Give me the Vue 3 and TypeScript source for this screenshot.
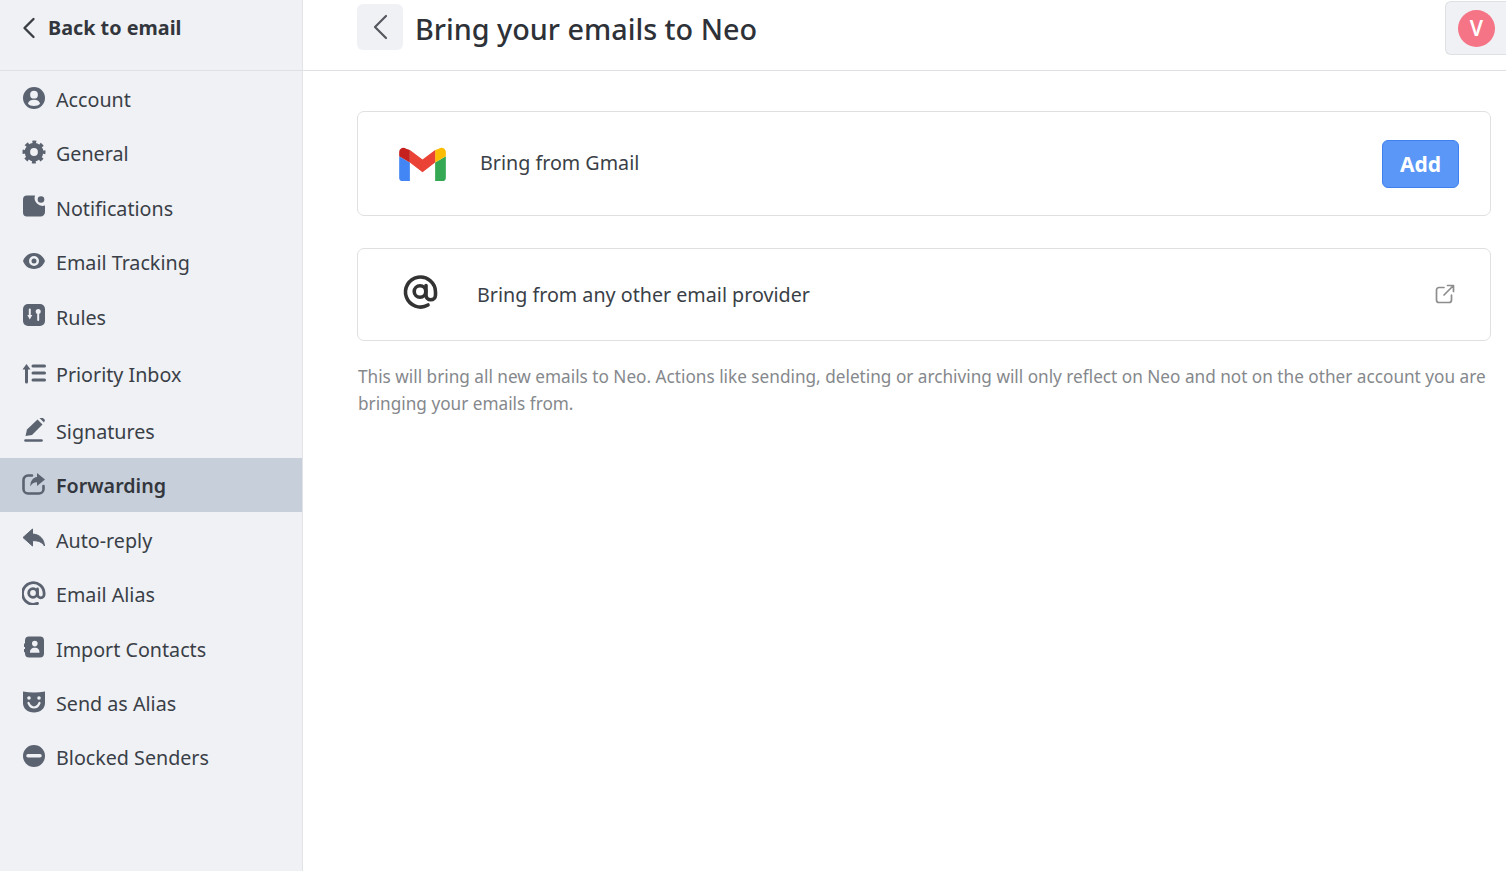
<script setup lang="ts">
interface Item { label: string; icon: string; gap?: boolean; gapSmall?: boolean; active?: boolean }
const items: Item[] = [
  { label: 'Account', icon: 'account' },
  { label: 'General', icon: 'general' },
  { label: 'Notifications', icon: 'notifications' },
  { label: 'Email Tracking', icon: 'tracking' },
  { label: 'Rules', icon: 'rules' },
  { label: 'Priority Inbox', icon: 'priority', gap: true },
  { label: 'Signatures', icon: 'signatures', gapSmall: true },
  { label: 'Forwarding', icon: 'forwarding', active: true },
  { label: 'Auto-reply', icon: 'reply' },
  { label: 'Email Alias', icon: 'alias' },
  { label: 'Import Contacts', icon: 'contacts' },
  { label: 'Send as Alias', icon: 'mask' },
  { label: 'Blocked Senders', icon: 'blocked' },
]
</script>

<template>
  <div class="page">
    <aside class="side">
      <div class="back">
        <svg class="back-ico" width="14" height="22" viewBox="0 0 14 22"><path d="M11.5 2 L2.500 11 L11.500 20" fill="none" stroke="#3b3f45" stroke-width="2.400" stroke-linecap="round" stroke-linejoin="round"/></svg>
        <span>Back to email</span>
      </div>
      <nav class="nav">
        <a v-for="it in items" :key="it.label" class="row" :class="{ active: it.active, gap: it.gap, 'gap-s': it.gapSmall }">
          <svg class="ico" width="24" height="24" viewBox="0 0 24 24" fill="#5b6270">
            <template v-if="it.icon === 'account'">
              <path fill-rule="evenodd" d="M12 1a11 11 0 1 0 0 22a11 11 0 0 0 0-22Zm0 3.800a3.900 3.900 0 1 1 0 7.800a3.900 3.900 0 0 1 0-7.800Zm-6 13c.4-2.800 2.600-4 6-4s5.600 1.200 6 4c-1.300 1.400-3.400 2.200-6 2.200s-4.700-.8-6-2.200Z"/>
            </template>
            <template v-else-if="it.icon === 'general'">
              <circle cx="12" cy="12" r="6.600" fill="none" stroke="#5b6270" stroke-width="5.400"/>
              <circle cx="12" cy="12" r="10" fill="none" stroke="#5b6270" stroke-width="3" stroke-dasharray="3.850 4" stroke-dashoffset="1.900"/>
            </template>
            <template v-else-if="it.icon === 'notifications'">
              <path d="M5 1.500h8a8 8 0 0 0 10 10V18a4.500 4.500 0 0 1-4.500 4.500H5A4 4 0 0 1 1 18.500V5.500a4 4 0 0 1 4-4Z"/>
              <circle cx="19" cy="5.500" r="3.300"/>
            </template>
            <template v-else-if="it.icon === 'tracking'">
              <path fill-rule="evenodd" d="M12 4C6.500 4 2.500 7.600 1 12c1.500 4.400 5.500 8 11 8s9.500-3.600 11-8c-1.500-4.400-5.500-8-11-8Zm0 3a5 5 0 1 1 0 10a5 5 0 0 1 0-10Zm0 2.500a2.500 2.500 0 1 0 0 5a2.500 2.500 0 0 0 0-5Z"/>
            </template>
            <template v-else-if="it.icon === 'rules'">
              <rect x="1" y="1" width="22" height="22" rx="5"/>
              <path d="M7.800 6.500v5" stroke="#eff1f5" stroke-width="2" stroke-linecap="round"/>
              <path d="M5.300 12h5l-2.500 4.500Z" fill="#eff1f5"/>
              <path d="M16.200 11v6" stroke="#eff1f5" stroke-width="2" stroke-linecap="round"/>
              <circle cx="16.200" cy="8.500" r="2.500" fill="#eff1f5"/>
            </template>
            <template v-else-if="it.icon === 'priority'">
              <path d="M4.500 21V7" stroke="#5b6270" stroke-width="3" stroke-linecap="round"/>
              <path d="M.5 8.500L4.500 3l4 5.500Z"/>
              <path d="M11 5h11.500M11 12h11.500M11 19h11.500" stroke="#5b6270" stroke-width="3" stroke-linecap="round"/>
            </template>
            <template v-else-if="it.icon === 'signatures'">
              <path d="M3.500 18l1.500-6.500L15.500 1.500l5 5L10 17Z"/>
              <path d="M17.500 0l2-1.500 3.500 3.500-1 2.500Z"/>
              <path d="M3.500 22.500h16" stroke="#5b6270" stroke-width="2.600" stroke-linecap="round"/>
            </template>
            <template v-else-if="it.icon === 'forwarding'">
              <path d="M10 3.500H6a4.500 4.500 0 0 0-4.500 4.500v9A4.500 4.500 0 0 0 6 21.500h11a4.500 4.500 0 0 0 4.500-4.500v-3" fill="none" stroke="#5b6270" stroke-width="2.600" stroke-linecap="round"/>
              <path d="M15 1l8 6.500-8 6.500v-3.700c-3.300 0-5 1.200-6.700 4.200 0-5.500 2.500-9 6.700-9.500Z"/>
            </template>
            <template v-else-if="it.icon === 'reply'">
              <path d="M10.500 3v5C18 8.500 22 13 22.500 20c-2.500-4-6-5.500-12-5.300V20L1 11.500Z" stroke="#5b6270" stroke-width="1" stroke-linejoin="round"/>
            </template>
            <template v-else-if="it.icon === 'alias'">
              <circle cx="11" cy="12" r="4.300" fill="none" stroke="#5b6270" stroke-width="2.800"/>
              <path d="M15.500 8v5.500a3.300 3.300 0 0 0 6.600 0V12A10.800 10.800 0 1 0 15.500 22.400" fill="none" stroke="#5b6270" stroke-width="2.800" stroke-linecap="round"/>
            </template>
            <template v-else-if="it.icon === 'contacts'">
              <path fill-rule="evenodd" d="M7 1.500h11a4 4 0 0 1 4 4v13a4 4 0 0 1-4 4H7a4 4 0 0 1-4-4v-1.300H2V14h1v-2H2V8.500h1V5.500a4 4 0 0 1 4-4Zm5.800 4.300a2.800 2.800 0 1 0 0 5.600a2.800 2.800 0 0 0 0-5.600ZM8 17.800h9.500c.200-3-1.500-5-4.700-5s-5 2-4.800 5Z"/>
            </template>
            <template v-else-if="it.icon === 'mask'">
              <path d="M1 1.500c7 1.300 15 1.300 22 0V13c0 5.500-4.500 9.500-11 9.500S1 18.500 1 13Z"/>
              <circle cx="7" cy="8" r="1.800" fill="#eff1f5"/>
              <circle cx="17" cy="8" r="1.800" fill="#eff1f5"/>
              <path d="M6.500 13c1.500 3.500 3.500 4.500 5.500 4.500s4-1 5.500-4.500" fill="none" stroke="#eff1f5" stroke-width="2.200" stroke-linecap="round"/>
            </template>
            <template v-else-if="it.icon === 'blocked'">
              <path fill-rule="evenodd" d="M12 1a11 11 0 1 0 0 22a11 11 0 0 0 0-22ZM6 10h12a1.500 1.500 0 0 1 0 3.500H6A1.500 1.500 0 0 1 6 10Z"/>
            </template>
          </svg>
          <span class="lbl">{{ it.label }}</span>
        </a>
      </nav>
    </aside>

    <main class="main">
      <header class="head">
        <button class="head-back" type="button">
          <svg width="16" height="26" viewBox="0 0 16 26"><path d="M14 2 L3 13 L14 24" fill="none" stroke="#54585e" stroke-width="2.200" stroke-linecap="round" stroke-linejoin="round"/></svg>
        </button>
        <h1 class="title">Bring your emails to Neo</h1>
        <div class="avatar-box"><div class="avatar">V</div></div>
      </header>

      <section class="body">
        <div class="card card-gmail">
          <svg class="gmail" width="47" height="35" viewBox="0 0 48 36">
            <path d="M0 9.500V31.500a3.500 3.500 0 0 0 3.500 3.500H11V16Z" fill="#4285f4"/>
            <path d="M37 35h7.500A3.500 3.500 0 0 0 48 31.500V9.500L37 16Z" fill="#34a853"/>
            <path d="M37 3v13L48 9.500V5.200C48 1.500 43.800-.6 40.800 1.700Z" fill="#fbbc04"/>
            <path d="M11 16V3l13 9.800L37 3v13L24 26Z" fill="#ea4335"/>
            <path d="M0 5.200V9.500L11 16V3L7.200 1.700C4.200-.6 0 1.500 0 5.200Z" fill="#c5221f"/>
          </svg>
          <span class="card-text gmail-text">Bring from Gmail</span>
          <button class="add" type="button">Add</button>
        </div>
        <div class="card card-other">
          <svg class="at" width="38" height="38" viewBox="0 0 38 38">
            <circle cx="18" cy="18.500" r="5.800" fill="none" stroke="#333" stroke-width="3.600"/>
            <path d="M24 12.500V22a4.500 4.500 0 0 0 9.500 0v-3A15 15 0 1 0 26 32" fill="none" stroke="#333" stroke-width="3.600" stroke-linecap="round"/>
          </svg>
          <span class="card-text other-text">Bring from any other email provider</span>
          <svg class="ext" width="20" height="20" viewBox="0 0 20 20" fill="none" stroke="#8d8d8d" stroke-width="1.700" stroke-linecap="round" stroke-linejoin="round"><path d="M9 3.500H4a2.500 2.500 0 0 0-2.500 2.500v10A2.500 2.500 0 0 0 4 18.500h10a2.500 2.500 0 0 0 2.500-2.500v-5"/><path d="M9 11L18 2M12.500 1.500H18.500V7.500"/></svg>
        </div>
        <p class="note">This will bring all new emails to Neo. Actions like sending, deleting or archiving will only reflect on Neo and not on the other account you are bringing your emails from.</p>
      </section>
    </main>
  </div>
</template>

<style>
html, body { margin: 0; background: #fff; overflow: hidden; }
</style>

<style scoped>
.page { display: flex; width: 1506px; height: 871px; font-family: "Noto Sans", "Open Sans", sans-serif; color: #33373d; }
.side { width: 302px; flex: none; background: #eff1f5; border-right: 1px solid #e2e3e6; display: flex; flex-direction: column; }
.back { box-sizing: border-box; border-bottom: 1px solid #dfe0e3; display: flex; align-items: flex-start; padding: 15px 0 0 22px; font-weight: 700; font-size: 19.800px; line-height: 26px; color: #33373d; height: 71px; }
.back-ico { margin-right: 12px; margin-top: 2px; }
.nav { display: flex; flex-direction: column; padding-top: 1px; }
.row { display: flex; align-items: center; height: 54.400px; padding-left: 21.500px; font-size: 19.700px; color: #3a3f47; flex: none; }
.row.gap { margin-top: 3.300px; }
.row.gap-s { margin-top: 2.300px; }
.row.active { background: #c7cfdb; font-weight: 600; color: #33373d; height: 54px; margin-bottom: .4px; }
.ico { flex: none; margin-right: 10.500px; margin-top: -3px; width: 24px; height: 24px; }
.lbl { line-height: 1; padding-top: 1.500px; }
.main { flex: 1; min-width: 0; display: flex; flex-direction: column; }
.head { height: 71px; box-sizing: border-box; border-bottom: 1px solid #dfe0e3; display: flex; align-items: flex-start; padding: 4px 0 0 54px; }
.head-back { width: 46px; height: 46px; background: #eff1f5; border: 0; border-radius: 6px; padding: 0; display: flex; align-items: center; justify-content: center; flex: none; }
.title { margin: 0 0 0 12px; font-size: 28.750px; line-height: 50px; font-weight: 500; color: #2e3238; flex: 1; }
.avatar-box { width: 60px; margin-top: -3px; background: #eff1f5; border: 1px solid #dfe0e3; border-right: 0; border-radius: 6px 0 0 6px; display: flex; align-items: center; height: 52px; }
.avatar { width: 37px; height: 37px; margin-left: 12px; border-radius: 50%; background: #f57486; color: #fff; font-size: 21px; font-weight: 600; display: flex; align-items: center; justify-content: center; }
.body { padding: 40px 15px 0 54px; display: flex; flex-direction: column; }
.card { border: 1px solid #e0e0e0; border-radius: 7px; display: flex; align-items: center; box-sizing: border-box; }
.card-gmail { height: 105px; padding: 0 31px 0 41px; }
.card-other { height: 93px; margin-top: 32px; padding: 0 35px 0 44px; }
.gmail { flex: none; margin-top: 1px; }
.at { flex: none; margin-top: -6px; }
.card-text { flex: 1; font-size: 19.700px; color: #3a3f47; }
.gmail-text { margin-left: 34px; margin-top: -2px; }
.other-text { margin-left: 37px; }
.add { width: 77px; height: 48px; background: #5b97f6; border: 1px solid #3f80ef; border-radius: 6px; color: #fff; font: 700 21px/46px "Noto Sans", sans-serif; padding: 0; margin-top: 1px; }
.ext { flex: none; margin-top: -1px; }
.note { margin: 22px 0 0 1px; font-size: 17.200px; line-height: 27px; color: #85888c; }
</style>
